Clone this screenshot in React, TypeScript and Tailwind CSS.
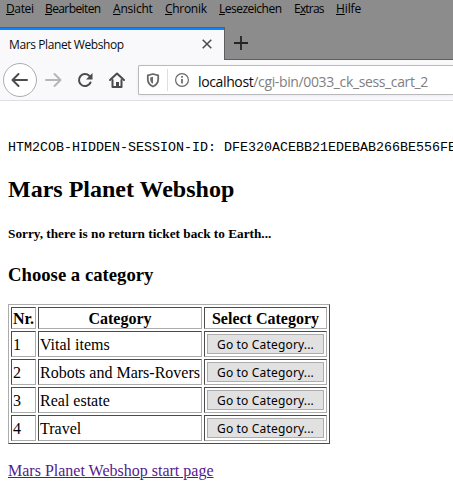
import React from "react";

const menu = [
  { pre: "", key: "D", rest: "atei", cls: "w-[39px] tracking-[-0.35px]" },
  { pre: "", key: "B", rest: "earbeiten", cls: "w-[68px] tracking-[-0.6px]" },
  { pre: "", key: "A", rest: "nsicht", cls: "w-[52px] tracking-[-0.2px]" },
  { pre: "", key: "C", rest: "hronik", cls: "w-[54px] tracking-[-0.3px]" },
  { pre: "", key: "L", rest: "esezeichen", cls: "w-[75px] tracking-[-0.5px]" },
  { pre: "E", key: "x", rest: "tras", cls: "w-[42px] tracking-[-0.8px]" },
  { pre: "", key: "H", rest: "ilfe", cls: "w-[40px] tracking-[-0.1px]" },
];

const rows = ["Vital items", "Robots and Mars-Rovers", "Real estate", "Travel"];

const cell =
  "flex items-center border border-t-[#4b4b4b] border-l-[#4b4b4b] border-r-[#acacac] border-b-[#acacac] px-px whitespace-nowrap";

function MenuBar() {
  return (
    <div className="flex h-[27px] pl-[6px] text-[12px] leading-[18px] text-black">
      {menu.map((m) => (
        <span key={m.key} className={`block shrink-0 whitespace-nowrap ${m.cls}`}>
          {m.pre}
          <span className="underline decoration-1 underline-offset-1">{m.key}</span>
          {m.rest}
        </span>
      ))}
    </div>
  );
}

function TabStrip() {
  return (
    <div className="flex h-[33px]">
      <div className="flex h-[33px] w-[225px] items-center justify-between border-t border-r border-[#5f5f61] bg-[#f9f9fb] shadow-[inset_0_2px_0_#0a84ff]">
        <span className="pt-[2px] pl-[9px] text-[12px] tracking-[-0.4px] whitespace-nowrap text-[#0c0c0d]">
          Mars Planet Webshop
        </span>
        <svg className="mr-[12px]" width="10" height="10" viewBox="0 0 10 10">
          <path d="M.7.7l8.6 8.6M9.3.7L.7 9.3" stroke="#4a4a4b" strokeWidth="1.5" />
        </svg>
      </div>
      <div className="h-[33px] flex-1 border-b border-[#5f5f61] pt-[9px] pl-[9px]">
        <svg width="14" height="14" viewBox="0 0 14 14">
          <path d="M7 0v14M0 7h14" stroke="#242425" strokeWidth="1.8" />
        </svg>
      </div>
    </div>
  );
}

function NavBar() {
  return (
    <div className="flex h-[41px] border-b border-[#dfdfe1] bg-[#f9f9fb]">
      <svg className="shrink-0" width="138" height="40" viewBox="0 0 138 40" fill="none" stroke="#4b4b4c" strokeWidth="2" strokeLinecap="round" strokeLinejoin="round">
        <circle cx="20" cy="20" r="16.5" fill="#fff" stroke="#adadae" strokeWidth="1" />
        <path d="M27 20H13M18.5 14l-6 6 6 6" />
        <path d="M46 20h14M54.500 14l6 6-6 6" stroke="#b6b6b8" />
        <path d="M90.500 22.500a6 6 0 1 1-1.300-6.700" />
        <path d="M92.500 13v6.500H86z" fill="#4b4b4c" stroke="none" />
        <path d="M110 20l7-6.500 7 6.500" />
        <path d="M112.500 20v7h9v-7" />
        <path d="M116 22h3v5h-3z" fill="#4b4b4c" stroke="none" />
      </svg>
      <div className="mt-[5px] flex h-[30px] flex-1 items-center rounded-l-[2px] border border-r-0 border-[#b9b9bb] bg-white shadow-[0_1px_3px_rgba(0,0,0,0.06)]">
        <svg className="shrink-0" width="56" height="28" viewBox="0 0 56 28" fill="none">
          <path d="M14 8l5.200 1.300v4c0 3.700-2 5.900-5.200 7.200-3.200-1.300-5.200-3.500-5.200-7.200v-4z" stroke="#69696b" strokeWidth="1.800" strokeLinejoin="round" />
          <path d="M14 10.700v7.100c-1.900-1.100-2.800-2.400-2.800-4.500v-1.900z" fill="#69696b" />
          <path d="M28.500 3v22" stroke="#dedee0" />
          <circle cx="43" cy="14" r="6.400" stroke="#69696b" strokeWidth="1.200" />
          <path d="M43 13v4.500M43 10v1.700" stroke="#69696b" strokeWidth="1.700" />
        </svg>
        <span className="pt-[2px] pl-[3px] font-['Open_Sans',sans-serif] text-[14px] tracking-[-0.37px] whitespace-nowrap text-[#808081]">
          <span className="text-[#0c0c0d]">localhost</span>/cgi-bin/0033_ck_sess_cart_2
        </span>
      </div>
    </div>
  );
}

export default function App() {
  return (
    <div className="h-[495px] w-[453px] overflow-hidden bg-white">
      <header className="bg-[#8c8c8c] font-['Open_Sans',sans-serif]">
        <MenuBar />
        <TabStrip />
        <NavBar />
      </header>
      <main className="px-2 pt-[39px] font-['Liberation_Serif',serif] text-[16px] leading-[18px] text-black">
        <pre className="h-[15px] font-['Liberation_Mono',monospace] text-[13.333px] leading-[15px]">
          HTM2COB-HIDDEN-SESSION-ID: DFE320ACEBB21EDEBAB266BE556FE
        </pre>
        <h1 className="mt-[21px] text-[24px] leading-[27px] font-bold">Mars Planet Webshop</h1>
        <h5 className="mt-[23px] text-[13.280px] leading-[15px] font-bold">Sorry, there is no return ticket back to Earth...</h5>
        <h3 className="mt-[23px] text-[18.720px] leading-[22px] font-bold">Choose a category</h3>
        <div className="mt-[18px] grid h-[140px] w-[322px] grid-cols-[25px_164px_123px] grid-rows-[22px_26px_26px_26px_26px] gap-[2px] border border-t-[#acacac] border-r-[#4b4b4b] border-b-[#4b4b4b] border-l-[#acacac] p-[2px]">
          <div className={`${cell} justify-center pt-[2px] font-bold`}>Nr.</div>
          <div className={`${cell} justify-center pt-[2px] font-bold`}>Category</div>
          <div className={`${cell} justify-center pt-[2px] font-bold`}>Select Category</div>
          {rows.map((name, i) => (
            <React.Fragment key={name}>
              <div className={`${cell} pt-[2px]`}>{i + 1}</div>
              <div className={`${cell} pt-[2px]`}>{name}</div>
              <div className={`${cell} justify-center`}>
                <button className="flex h-[20px] w-[117px] items-center justify-center border border-[#adadad] bg-[#e1e1e1] pt-[2px] font-['Noto_Sans',sans-serif] text-[12px] tracking-[0.17px]">
                  Go to Category...
                </button>
              </div>
            </React.Fragment>
          ))}
        </div>
        <a className="mt-[18px] block w-fit text-[#551a8b] underline decoration-1 underline-offset-1" href="#">
          Mars Planet Webshop start page
        </a>
      </main>
    </div>
  );
}
